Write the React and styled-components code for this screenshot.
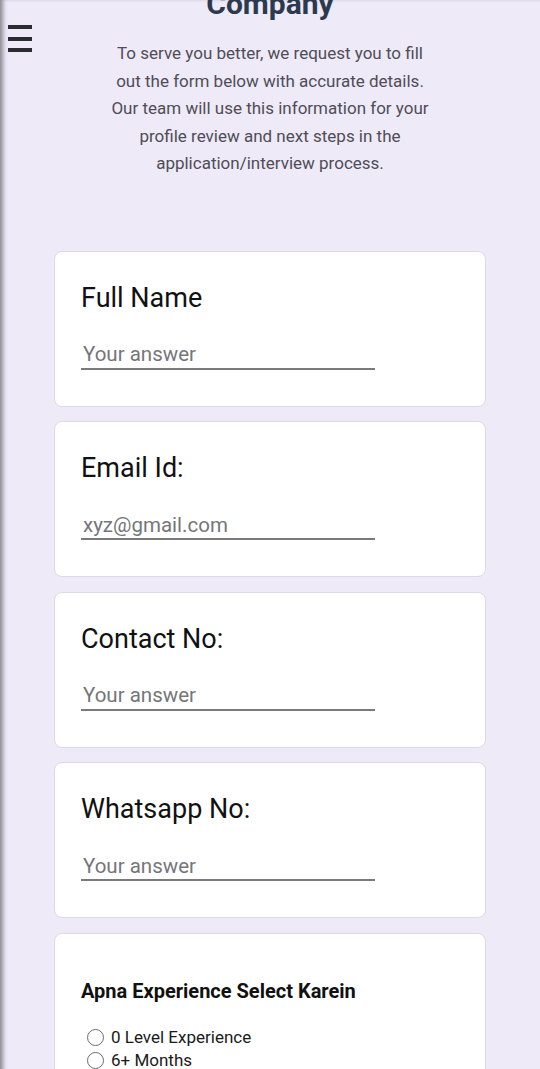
import React from "react";
import styled, { createGlobalStyle } from "styled-components";

const GlobalStyle = createGlobalStyle`
  html, body {
    margin: 0;
    padding: 0;
    background: #eeeaf8;
  }
  body {
    font-family: Roboto, "Liberation Sans", sans-serif;
    overflow: hidden;
  }
`;

// page wrapper with the soft edge on the left
const Page = styled.div`
  position: relative;
  min-height: 1069px;
  background: #eeeaf8;
  box-shadow: inset 5px 0 4px -2px rgba(60, 60, 60, 0.55);
  display: flex;
  flex-direction: column;
  align-items: center;
  padding-bottom: 40px;
`;

const MenuButton = styled.button`
  position: absolute;
  top: 25px;
  left: 8px;
  width: 24px;
  height: 27px;
  padding: 0;
  border: 0;
  background: transparent;
  display: flex;
  flex-direction: column;
  justify-content: space-between;
`;

const Bar = styled.span`
  display: block;
  height: 4px;
  width: 100%;
  background: #2b2b33;
`;

const Header = styled.header`
  margin-top: -14px;
  display: flex;
  flex-direction: column;
  align-items: center;
`;

const Title = styled.h1`
  margin: 0;
  font-size: 30px;
  line-height: 35px;
  font-weight: 700;
  color: #2c3a4f;
`;

const Intro = styled.p`
  margin: 19px 0 0;
  width: 330px;
  text-align: center;
  font-size: 17px;
  line-height: 27.5px;
  color: #4f4d57;
`;

const Form = styled.form`
  margin-top: 73px;
  width: 432px;
  display: flex;
  flex-direction: column;
  gap: 14.6px;
`;

const Card = styled.section`
  background: #fff;
  border: 1px solid #dcdae2;
  border-radius: 8px;
  padding: ${(p) => p.$pad || "32px 26px 36px"};
  display: flex;
  flex-direction: column;
`;

const Label = styled.label`
  font-size: 27px;
  line-height: 28px;
  color: #111;
`;

const Answer = styled.input`
  margin-top: 29px;
  width: 294px;
  height: 29px;
  box-sizing: border-box;
  border: 0;
  border-bottom: 2px solid #7a7a7a;
  padding: 0 2px;
  font-family: inherit;
  font-size: 20.5px;
  color: #222;
  background: transparent;
  outline: none;
  &::placeholder {
    color: #76757a;
  }
`;

const Question = styled.h2`
  margin: 0;
  font-size: 20px;
  line-height: 22px;
  font-weight: 700;
  color: #111;
`;

const Options = styled.div`
  margin-top: 24px;
  display: flex;
  flex-direction: column;
`;

const Option = styled.label`
  display: flex;
  align-items: center;
  gap: 7px;
  padding-left: 6px;
  height: 23px;
  font-size: 17px;
  color: #1a1a1a;
`;

const Circle = styled.span`
  width: 15px;
  height: 15px;
  border: 1.5px solid #6c6c70;
  border-radius: 50%;
  background: #fff;
`;

const fields = [
  { label: "Full Name", placeholder: "Your answer" },
  { label: "Email Id:", placeholder: "xyz@gmail.com" },
  { label: "Contact No:", placeholder: "Your answer" },
  { label: "Whatsapp No:", placeholder: "Your answer" },
];

const experience = ["0 Level Experience", "6+ Months", "1+ Year", "2+ Years"];

export default function App() {
  return (
    <>
      <GlobalStyle />
      <Page>
        <MenuButton aria-label="menu">
          <Bar />
          <Bar />
          <Bar />
        </MenuButton>
        <Header>
          <Title>Company</Title>
          <Intro>
            To serve you better, we request you to fill out the form below with
            accurate details. Our team will use this information for your
            profile review and next steps in the application/interview process.
          </Intro>
        </Header>
        <Form>
          {fields.map((f) => (
            <Card key={f.label}>
              <Label>{f.label}</Label>
              <Answer placeholder={f.placeholder} />
            </Card>
          ))}
          <Card $pad="46px 26px 30px">
            <Question>Apna Experience Select Karein</Question>
            <Options>
              {experience.map((e) => (
                <Option key={e}>
                  <Circle />
                  {e}
                </Option>
              ))}
            </Options>
          </Card>
        </Form>
      </Page>
    </>
  );
}
